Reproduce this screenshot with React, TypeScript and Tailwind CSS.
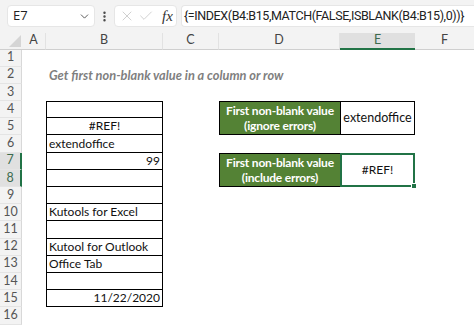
import React from "react";
import { ChevronDown, X, Check, EllipsisVertical } from "lucide-react";

const font = { fontFamily: "Lato, 'Open Sans', sans-serif" };

const bRows: Record<number, { text: string; align: "l" | "c" | "r" }> = {
  5: { text: "#REF!", align: "c" },
  6: { text: "extendoffice", align: "l" },
  7: { text: "99", align: "r" },
  10: { text: "Kutools for Excel", align: "l" },
  12: { text: "Kutool for Outlook", align: "l" },
  13: { text: "Office Tab", align: "l" },
  15: { text: "11/22/2020", align: "r" },
};

const rowStart: Record<number, string> = {
  1: "row-start-2",
  2: "row-start-3",
  3: "row-start-4",
  4: "row-start-5",
  5: "row-start-6",
  6: "row-start-7",
  7: "row-start-8",
  8: "row-start-9",
  9: "row-start-10",
  10: "row-start-11",
  11: "row-start-12",
  12: "row-start-13",
  13: "row-start-14",
  14: "row-start-15",
  15: "row-start-16",
  16: "row-start-17",
};

export default function App() {
  const rows = Array.from({ length: 16 }, (_, i) => i + 1);
  return (
    <div className="w-[474px] h-[326px] overflow-hidden bg-white" style={font}>
      {/* formula bar */}
      <div className="h-[33px] bg-[#f3f3f3] flex items-center pl-[7px] gap-0 pb-[1px]">
        <div className="w-[88px] h-[22px] bg-white rounded-[4px] border border-[#e6e6e6] flex items-center justify-between pl-[5px] pr-[3px]">
          <span className="text-[13px] text-[#222]" style={{ fontFamily: "'Open Sans', sans-serif" }}>E7</span>
          <ChevronDown size={13} strokeWidth={1.6} className="text-[#444]" />
        </div>
        <div className="w-[19px] flex justify-center">
          <EllipsisVertical size={13} strokeWidth={2.5} className="text-[#444]" />
        </div>
        <div className="w-[63px] h-[22px] bg-white rounded-[4px] border border-[#e6e6e6] flex items-center pl-[4px] gap-[3px]">
          <X size={16} strokeWidth={1.2} className="text-[#c4c4c4]" />
          <Check size={16} strokeWidth={1.2} className="text-[#c4c4c4]" />
          <span className="ml-[5px] text-[15px] italic text-[#333]" style={{ fontFamily: "'Liberation Serif', serif" }}>fx</span>
        </div>
        <div className="ml-[4px] flex-1 h-[22px] bg-white rounded-l-[4px] border border-r-0 border-[#e6e6e6] flex items-center pl-[2px] overflow-hidden whitespace-nowrap">
          <span className="text-[12.5px] tracking-[-0.4px] text-[#222]" style={{ fontFamily: "Roboto, sans-serif" }}>
            {"{=INDEX(B4:B15,MATCH(FALSE,ISBLANK(B4:B15),0))}"}
          </span>
        </div>
      </div>

      {/* sheet */}
      <div className="grid grid-cols-[22px_24px_117px_56px_121px_75px_1fr] grid-rows-[16.5px_repeat(16,17.2px)] text-[12px] text-[#111]">
        {/* corner */}
        <div className="col-start-1 row-start-1 bg-[#f3f3f3] border-b border-[#cfcfcf] relative">
          <div className="absolute right-[1px] bottom-[2px] w-0 h-0 border-l-[12px] border-l-transparent border-b-[12px] border-b-[#d5d5d5]" />
        </div>
        {/* column headers */}
        {["A", "B", "C", "D"].map((c, i) => (
          <div
            key={c}
            className={`row-start-1 bg-[#f3f3f3] border-b border-[#cfcfcf] border-r border-r-[#e2e2e2] flex items-center justify-center text-[12.5px] text-[#444] ${
              ["col-start-2", "col-start-3", "col-start-4", "col-start-5"][i]
            }`}
          >
            {c}
          </div>
        ))}
        <div className="row-start-1 col-start-6 bg-[#e0e0e0] border-b-2 border-[#217346] flex items-center justify-center text-[12.5px] text-[#3d6b4f]">
          E
        </div>
        <div className="row-start-1 col-start-7 bg-[#f3f3f3] border-b border-[#cfcfcf] flex items-center justify-start pl-[26px] text-[12.5px] text-[#444]">
          F
        </div>

        {/* row headers */}
        {rows.map((r) => (
          <div
            key={r}
            className={`col-start-1 ${rowStart[r]} flex items-center justify-center text-[12.5px] ${
              r === 7 || r === 8
                ? "bg-[#e0e0e0] border-r-2 border-r-[#217346] text-[#3d6b4f]"
                : "bg-[#f3f3f3] border-r border-r-[#d8d8d8] text-[#555]"
            } border-b border-b-[#e4e4e4]`}
          >
            {r}
          </div>
        ))}

        {/* title */}
        <div className="col-start-3 col-span-5 row-start-3 flex items-center pl-[3px] whitespace-nowrap font-bold italic text-[#7f7f7f] text-[12.8px]">
          Get first non-blank value in a column or row
        </div>

        {/* B column table */}
        {rows
          .filter((r) => r >= 4 && r <= 15)
          .map((r) => {
            const cell = bRows[r];
            return (
              <div
                key={r}
                className={`col-start-3 ${rowStart[r]} border-x border-b border-black ${r === 4 ? "border-t" : ""} flex items-center px-[2px] whitespace-nowrap ${
                  cell?.align === "c" ? "justify-center" : cell?.align === "r" ? "justify-end" : "justify-start"
                }`}
              >
                {cell?.text}
              </div>
            );
          })}

        {/* box 1 */}
        <div className="col-start-5 row-start-5 row-span-2 bg-[#548235] border border-black border-r-0 flex flex-col items-center justify-center text-white font-bold leading-[15px] text-[12px] tracking-[-0.2px] whitespace-nowrap">
          <span>First non-blank value</span>
          <span>(ignore errors)</span>
        </div>
        <div className="col-start-6 row-start-5 row-span-2 border border-black flex items-center justify-center text-[12.5px]">
          extendoffice
        </div>

        {/* box 2 */}
        <div className="col-start-5 row-start-8 row-span-2 bg-[#548235] border border-black border-r-0 flex flex-col items-center justify-center text-white font-bold leading-[15px] text-[12px] tracking-[-0.2px] whitespace-nowrap">
          <span>First non-blank value</span>
          <span>(include errors)</span>
        </div>
        <div className="col-start-6 row-start-8 row-span-2 border-2 border-[#217346] flex items-center justify-center relative">
          #REF!
          <div className="absolute right-[-4px] bottom-[-4px] w-[6px] h-[6px] bg-[#217346] border border-white" />
        </div>
      </div>
    </div>
  );
}
